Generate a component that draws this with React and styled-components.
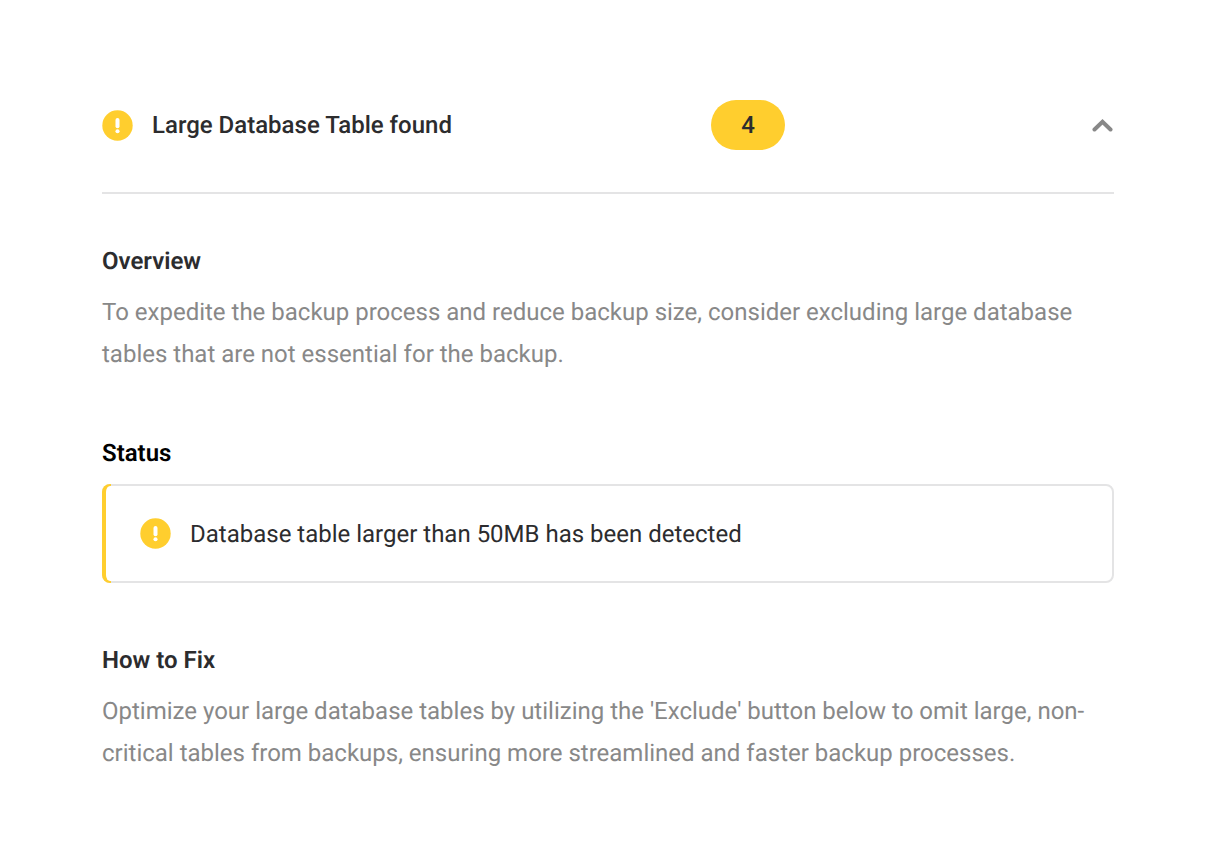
import React, { useState } from 'react';
import styled, { createGlobalStyle } from 'styled-components';

const GlobalStyle = createGlobalStyle`
  *, *::before { box-sizing: border-box; }
  body {
    margin: 0;
    background: #fff;
    color: #2c2c2e;
    font-family: Roboto, "Liberation Sans", sans-serif;
    font-size: 24px;
    text-rendering: geometricPrecision;
  }
`;

const Page = styled.main`
  padding: 84px 106px 64px 102px;
`;

const Header = styled.header`
  display: grid;
  grid-template-columns: 3fr 2fr;
  align-items: center;
  padding: 16px 0 42px;
  border-bottom: 2px solid #e4e4e5;
`;

const Tail = styled.div`
  display: flex;
  align-items: center;
  justify-content: space-between;
  padding-left: 2px;
`;

const Label = styled.div`
  display: flex;
  align-items: center;
  gap: 19px;
`;

const Title = styled.h1`
  margin: 0;
  font-size: 24px;
  font-weight: 500;
  line-height: 30px;
`;

const Count = styled.span`
  width: 74px;
  border-radius: 25px;
  background: #ffce2e;
  font-size: 24px;
  font-weight: 500;
  line-height: 50px;
  text-align: center;
`;

const Toggle = styled.button`
  display: flex;
  padding: 0;
  border: 0;
  background: none;
  cursor: pointer;
`;

const Section = styled.section`
  margin-top: ${(p) => p.$gap}px;
`;

const Heading = styled.h2`
  margin: 0;
  color: ${(p) => (p.$strong ? '#000' : 'inherit')};
  font-size: 24px;
  font-weight: 600;
  line-height: 30px;
`;

const Text = styled.p`
  margin: 15px 0 0;
  color: #888;
  line-height: 42px;
`;

const Notice = styled.div`
  position: relative;
  display: flex;
  align-items: center;
  gap: 19px;
  margin-top: 16px;
  padding: 32px 36px;
  border: 2px solid #e4e4e5;
  border-radius: 8px;
  line-height: 30px;

  &::before {
    content: '';
    position: absolute;
    top: -2px;
    bottom: -2px;
    left: -2px;
    width: 9px;
    border: 2px solid #ffce2e;
    border-left-width: 4px;
    border-right: 0;
    border-radius: 8px 0 0 8px;
  }
`;

const WarningIcon = () => (
  <svg width="31" height="31" viewBox="0 0 31 31" aria-hidden="true">
    <circle cx="15.500" cy="15.500" r="15.200" fill="#ffce2e" />
    <path d="M15.500 10v6.200" stroke="#fff" strokeWidth="4" strokeLinecap="round" />
    <circle cx="15.500" cy="21.300" r="2.050" fill="#fff" />
  </svg>
);

export default function App() {
  const [open, setOpen] = useState(true);
  return (
    <Page>
      <GlobalStyle />
      <Header>
        <Label>
          <WarningIcon />
          <Title>Large Database Table found</Title>
        </Label>
        <Tail>
          <Count>4</Count>
          <Toggle aria-label="Toggle details" aria-expanded={open} onClick={() => setOpen(!open)}>
            <svg width="22" height="16" viewBox="0 0 22 16">
              <path d="M2.500 12.500 10.500 4.800l8 7.700" fill="none" stroke="#888" strokeWidth="4" strokeLinecap="round" />
            </svg>
          </Toggle>
        </Tail>
      </Header>
      {open && (
        <>
          <Section $gap={52}>
            <Heading>Overview</Heading>
            <Text>
              To expedite the backup process and reduce backup size, consider excluding large
              database tables that are not essential for the backup.
            </Text>
          </Section>
          <Section $gap={63}>
            <Heading $strong>Status</Heading>
            <Notice>
              <WarningIcon />
              <span>Database table larger than 50MB has been detected</span>
            </Notice>
          </Section>
          <Section $gap={62}>
            <Heading>How to Fix</Heading>
            <Text>
              Optimize your large database tables by utilizing the 'Exclude' button below to omit
              large, non-critical tables from backups, ensuring more streamlined and faster backup
              processes.
            </Text>
          </Section>
        </>
      )}
    </Page>
  );
}
